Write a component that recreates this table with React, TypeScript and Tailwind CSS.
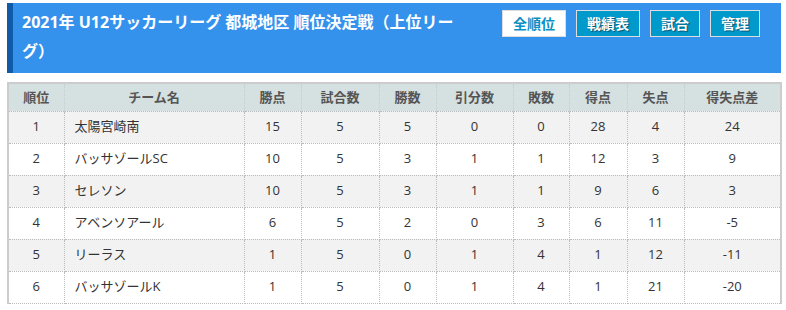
import React from 'react'

const cols = [56, 180, 57, 78, 57, 77, 56, 58, 57, 97]
const heads = ['順位', 'チーム名', '勝点', '試合数', '勝数', '引分数', '敗数', '得点', '失点', '得失点差']

const rows: (string | number)[][] = [
  [1, '太陽宮崎南', 15, 5, 5, 0, 0, 28, 4, 24],
  [2, 'バッサゾールSC', 10, 5, 3, 1, 1, 12, 3, 9],
  [3, 'セレソン', 10, 5, 3, 1, 1, 9, 6, 3],
  [4, 'アベンソアール', 6, 5, 2, 0, 3, 6, 11, -5],
  [5, 'リーラス', 1, 5, 0, 1, 4, 1, 12, -11],
  [6, 'バッサゾールK', 1, 5, 0, 1, 4, 1, 21, -20],
]

const navs = ['戦績表', '試合', '管理']

export default function App() {
  return (
    <div
      className="w-[786px] h-[310px] bg-white pt-[3px] pl-[7px] pr-[5px] text-[#333]"
      style={{ fontFamily: '"Open Sans", "Noto Sans CJK JP", sans-serif' }}
    >
      <div className="flex items-start justify-between h-[70px] bg-[#3592ec] border-l-[6px] border-[#0f5ba8] pl-[9px] pr-[21px]">
        <h1 className="w-[445px] pt-[5px] text-[16px] leading-[29px] font-bold text-white">
          2021年 U12サッカーリーグ 都城地区 順位決定戦（上位リーグ）
        </h1>
        <div className="flex gap-[10px] pt-[7px]">
          <span className="h-[27px] px-[10px] flex items-center border border-[#ddd] bg-white text-[14px] font-bold text-[#0a8fc4]">
            全順位
          </span>
          {navs.map((n) => (
            <span
              key={n}
              className="h-[27px] px-[10px] flex items-center border border-[#ddd] bg-[#0099cc] text-[14px] font-bold text-white [text-shadow:1px_1px_1px_rgba(0,0,0,0.45)]"
            >
              {n}
            </span>
          ))}
        </div>
      </div>

      <table className="mt-[9px] w-[773px] table-fixed border-collapse border-l-2 border-r-2 border-t-2 border-[#ccc] text-[13px]">
        <colgroup>
          {cols.map((w, i) => (
            <col key={i} style={{ width: w }} />
          ))}
        </colgroup>
        <thead>
          <tr className="h-[28px] bg-[#d5e0e0]">
            {heads.map((h) => (
              <th
                key={h}
                className="border-x border-dotted border-[#c4cccc] font-bold text-[#555] text-center p-0"
              >
                {h}
              </th>
            ))}
          </tr>
        </thead>
        <tbody>
          {rows.map((r, i) => (
            <tr key={i} className={i % 2 === 0 ? 'h-[32px] bg-[#f2f2f2]' : 'h-[32px] bg-white'}>
              {r.map((c, j) => (
                <td
                  key={j}
                  className={
                    j === 1
                      ? 'border border-dotted border-[#bbb] pl-[10px] text-left'
                      : 'border border-dotted border-[#bbb] text-center p-0'
                  }
                >
                  {c}
                </td>
              ))}
            </tr>
          ))}
        </tbody>
      </table>
    </div>
  )
}
